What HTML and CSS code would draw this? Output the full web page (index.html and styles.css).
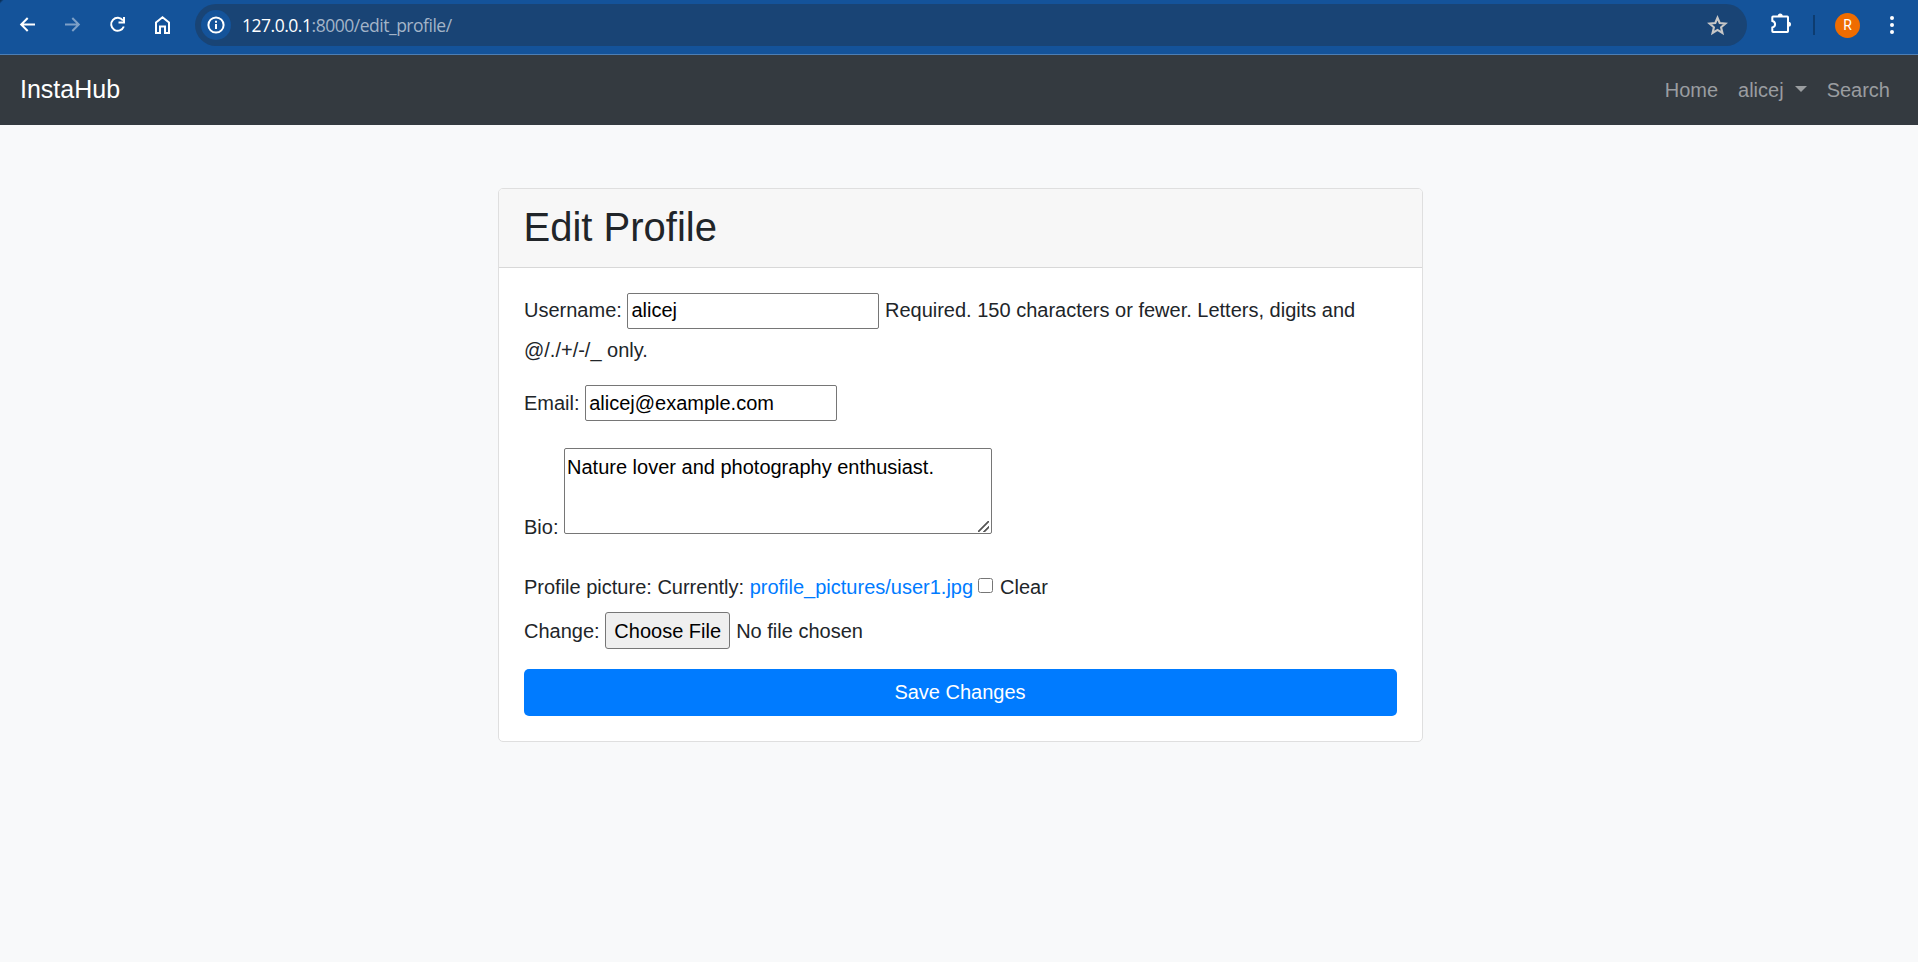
FILE: index.html
```html
<!DOCTYPE html>
<html lang="en">
<head>
<meta charset="utf-8">
<title>Edit Profile</title>
<link rel="stylesheet" href="styles.css">
</head>
<body>
<div class="toolbar">
  <svg class="icon" viewBox="0 0 25 26"><path d="M20 12.500H6.500M12.700 6L6.200 12.500l6.500 6.500"/></svg>
  <svg class="icon icon-off" viewBox="0 0 25 26"><path d="M5 12.500h13.500M12.300 6l6.500 6.500-6.500 6.500"/></svg>
  <svg class="icon" viewBox="0 0 25 26"><path d="M18 8.500A6.500 6.500 0 1 0 18.800 14.500M19 5v5.500h-5.500"/></svg>
  <svg class="icon" viewBox="0 0 25 26"><path d="M6 10.500l6.500-5.200 6.500 5.200V21h-4v-6.500h-5V21H6z"/></svg>
  <div class="address">
    <span class="site-info"><svg class="icon-info" viewBox="0 0 20 20"><circle cx="10" cy="10" r="7.600"/><path d="M10 9v5M10 5.800v2"/></svg></span>
    <span class="url"><b class="host">127.0.0.1</b>:8000/edit_profile/</span>
    <svg class="star" viewBox="0 0 20 20"><path d="M10 2.600l2.100 5 5.500.5-4.200 3.600 1.300 5.400-4.700-2.900-4.700 2.900 1.300-5.400L2.400 8.100l5.500-.5z"/></svg>
  </div>
  <svg class="puzzle" viewBox="0 0 22 22"><path d="M3 3.500h14.300q.7 0 .7.700v14.100q0 .7-.7.700H3q-.7 0-.7-.7V14.500c3.700-1 3.700-5.500 0-6.500V4.200q0-.7.700-.7z"/><path class="solid" d="M7.700 3a2.500 2.500 0 0 1 5 0zM18.500 8.700a2.500 2.500 0 0 1 0 5z"/></svg>
  <span class="divider"></span>
  <span class="avatar">R</span>
  <svg class="dots" viewBox="0 0 6 20"><circle cx="3" cy="3" r="2"/><circle cx="3" cy="10" r="2"/><circle cx="3" cy="17" r="2"/></svg>
</div>
<nav class="navbar">
  <a class="brand">InstaHub</a>
  <div class="links"><a>Home</a><a class="dropdown">alicej</a><a>Search</a></div>
</nav>
<main class="card">
  <header class="card-header"><h1>Edit Profile</h1></header>
  <form class="card-body">
    <p class="username">Username: <input class="field" type="text" value="alicej"> <span>Required. 150 characters or fewer. Letters, digits and</span><br><span>@/./+/-/_ only.</span></p>
    <p class="email">Email: <input class="field" type="text" value="alicej@example.com"></p>
    <p class="bio">Bio: <textarea class="area">Nature lover and photography enthusiast.</textarea></p>
    <div class="picture">Profile picture: Currently: <a class="link">profile_pictures/user1.jpg</a><input class="check" type="checkbox">Clear</div>
    <div class="change">Change: <button class="choose" type="button">Choose File</button><span>No file chosen</span></div>
    <button class="save" type="button">Save Changes</button>
  </form>
</main>
</body>
</html>
```

FILE: styles.css
```css
* { box-sizing: border-box; }
body { margin: 0; height: 962px; overflow: hidden; background: #f8f9fa; color: #212529; font: 20px/30px "Liberation Sans", Arial, sans-serif; }
.toolbar { display: flex; align-items: center; height: 55px; padding: 0 0 4px 15px; background: linear-gradient(135deg, #0b3058 1px, #14539a 3px); border-bottom: 1px solid #4c7eb5; }
.icon { width: 25px; height: 26px; margin-right: 20px; fill: none; stroke: #fff; stroke-width: 2; }
.icon-off { opacity: .45; }
.address { display: flex; align-items: center; width: 1552px; height: 42px; padding: 0 19px 0 6px; border-radius: 21px; background: #194475; }
.site-info { display: flex; align-items: center; justify-content: center; width: 30px; height: 30px; margin-right: 11px; border-radius: 50%; background: #14539a; }
.icon-info { width: 20px; height: 20px; fill: none; stroke: #fff; stroke-width: 2; }
.url { flex: 1; font: 17.5px "Open Sans", sans-serif; letter-spacing: -.48px; color: #a3b4c8; }
.host { font-weight: 400; color: #fff; }
.star { width: 21px; height: 21px; fill: none; stroke: #c7c7c7; stroke-width: 2; }
.puzzle { width: 22px; height: 22px; margin: 0 0 2px 23px; fill: none; stroke: #fff; stroke-width: 2; }
.puzzle .solid { fill: #fff; stroke: none; }
.divider { width: 2px; height: 20px; margin-left: 21px; background: #0d3c70; }
.avatar { width: 25px; height: 25px; margin-left: 20px; border-radius: 50%; background: #ef6c00; color: #fff; font: 14px/25px Roboto, sans-serif; text-align: center; }
.dots { width: 6px; height: 20px; margin-left: 29px; fill: #fff; }
.navbar { display: flex; align-items: center; justify-content: space-between; height: 70px; padding: 0 28px 0 20px; background: #343a40; }
.brand { padding-bottom: 2px; font-size: 25px; color: #fff; }
.links { display: flex; gap: 20px; color: #9a9da0; }
.dropdown::after { content: ""; display: inline-block; margin-left: 11px; vertical-align: 5px; border: 6px solid transparent; border-top-color: currentColor; border-bottom: 0; }
.card { width: 925px; margin: 63px auto 0 498px; border: 1px solid #dfdfdf; border-radius: 5px; background: #fff; overflow: hidden; }
.card-header { height: 79px; padding: 14px 25px 15px 24.5px; border-bottom: 1px solid #d8d8d8; background: #f7f7f7; }
h1 { margin: 0; font-size: 40px; line-height: 48px; font-weight: 500; }
.card-body { padding: 24px 25px 25px; }
p { margin: 0; }
.username { line-height: 40px; margin-top: -2px; }
.field { width: 252px; height: 36px; padding: 1px 3px; border: 1px solid #767676; border-radius: 2px; font: inherit; line-height: 30px; color: #000; }
.email { margin-top: 15px; }
.bio { margin-top: 27px; }
.area { width: 428px; height: 86px; padding: 3px 2px; border: 1px solid #767676; border-radius: 2px; font: inherit; color: #000; }
.area::-webkit-resizer { background: linear-gradient(135deg, transparent 44%, #555 46% 54%, transparent 56% 71%, #555 73% 81%, transparent 83%) right 2px bottom 1px / 11px 11px no-repeat; }
.picture { margin-top: 30px; }
.link { color: #007bff; }
.check { width: 15px; height: 15px; margin: 0 7px 0 5px; vertical-align: 1px; }
.change { margin-top: 10px; }
.choose { height: 37px; width: 125px; margin-right: 6px; padding: 0; border: 1px solid #767676; border-radius: 3px; background: #efefef; font: inherit; color: #000; }
.save { display: block; width: 100%; height: 47px; margin-top: 20px; padding: 0 1px 1px 0; border: 0; border-radius: 5px; background: #007bff; color: #fff; font: inherit; }
```
